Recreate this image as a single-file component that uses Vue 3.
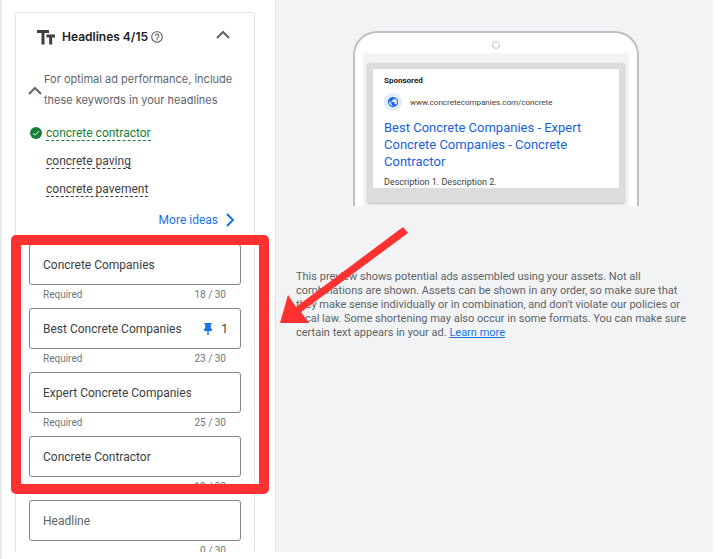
<template>
  <div class="editor">
    <section class="assets">
      <div class="card">
        <header class="card-header">
          <svg class="tt-icon" viewBox="0 0 18 15" aria-hidden="true">
            <path d="M0 0h12v3H7.500v11.500h-3V3H0zM9.500 4.500H18v3h-2.800v7h-3v-7H9.500z" />
          </svg>
          <h2>Headlines 4/15</h2>
          <button class="icon-btn" aria-label="Help">
            <svg class="help-icon" viewBox="0 0 24 24">
              <path d="M11 18h2v-2h-2v2zm1-16C6.480 2 2 6.480 2 12s4.480 10 10 10 10-4.480 10-10S17.520 2 12 2zm0 18c-4.410 0-8-3.590-8-8s3.590-8 8-8 8 3.590 8 8-3.590 8-8 8zm0-14c-2.210 0-4 1.790-4 4h2c0-1.100.9-2 2-2s2 .9 2 2c0 2-3 1.750-3 5h2c0-2.250 3-2.500 3-5 0-2.210-1.790-4-4-4z" />
            </svg>
          </button>
          <button class="icon-btn collapse" aria-label="Collapse headlines">
            <svg class="chevron" viewBox="0 0 14 9"><path d="M1 8l6-6 6 6" /></svg>
          </button>
        </header>

        <div class="hint">
          <button class="icon-btn" aria-label="Collapse keywords">
            <svg class="chevron" viewBox="0 0 14 9"><path d="M1 8l6-6 6 6" /></svg>
          </button>
          <p>For optimal ad performance, include these keywords in your headlines</p>
        </div>

        <ul class="keywords">
          <li v-for="k in keywords" :key="k.text" :class="{ used: k.used }">
            <svg v-if="k.used" class="check" viewBox="0 0 12 12" aria-hidden="true">
              <circle cx="6" cy="6" r="6" />
              <path d="M3 6.200l2 2 4-4" />
            </svg>
            <button class="keyword">{{ k.text }}</button>
          </li>
        </ul>

        <button class="more-ideas">
          More ideas
          <svg viewBox="0 0 9 14" aria-hidden="true"><path d="M1 1l6 6-6 6" /></svg>
        </button>

        <div class="fields">
          <div v-for="(h, i) in headlines" :key="i" class="field">
            <div class="box">
              <input v-model="h.text" type="text" placeholder="Headline" :aria-label="`Headline ${i + 1}`" />
              <span class="pin">
                <template v-if="h.pin">
                  <svg viewBox="0 0 8 12" aria-hidden="true">
                    <path d="M.5 0h7v1.500h-.7V5L8 6.500V8H4.700v4H3.300V8H0V6.500L1.200 5V1.500H.5z" />
                  </svg>
                  {{ h.pin }}
                </template>
              </span>
            </div>
            <div class="helper">
              <span>{{ h.required ? 'Required' : '' }}</span>
              <span>{{ h.text.length }} / 30</span>
            </div>
          </div>
          <div class="highlight"></div>
        </div>
      </div>
    </section>

    <section class="preview">
      <div class="phone">
        <div class="camera"></div>
        <div class="screen">
          <div class="ad-frame">
            <article class="ad">
              <strong>Sponsored</strong>
              <div class="site">
                <span class="globe">
                  <svg viewBox="0 0 24 24" aria-hidden="true">
                    <path d="M12 2C6.480 2 2 6.480 2 12s4.480 10 10 10 10-4.480 10-10S17.520 2 12 2zm-1 17.930c-3.950-.49-7-3.850-7-7.930 0-.62.08-1.210.21-1.790L9 15v1c0 1.100.9 2 2 2v1.930zm6.900-2.540c-.26-.81-1-1.390-1.900-1.390h-1v-3c0-.55-.45-1-1-1H8v-2h2c.55 0 1-.45 1-1V7h2c1.100 0 2-.9 2-2v-.41c2.930 1.190 5 4.060 5 7.410 0 2.080-.8 3.970-2.100 5.390z" />
                  </svg>
                </span>
                <span>www.concretecompanies.com/concrete</span>
              </div>
              <h3>Best Concrete Companies - Expert Concrete Companies - Concrete Contractor</h3>
              <p>Description 1. Description 2.</p>
            </article>
          </div>
        </div>
      </div>

      <p class="note">
        This preview shows potential ads assembled using your assets. Not all
        combinations are shown. Assets can be shown in any order, so make sure that
        they make sense individually or in combination, and don't violate our policies or
        local law. Some shortening may also occur in some formats. You can make sure
        certain text appears in your ad. <a href="#">Learn more</a>
      </p>

      <svg class="arrow" viewBox="0 0 128 97" aria-hidden="true">
        <path d="M123 0l5 6L21 85l8 11L0 96l8-28 8 12z" />
      </svg>
    </section>
  </div>
</template>

<script setup>
import { ref } from 'vue'

const keywords = [
  { text: 'concrete contractor', used: true },
  { text: 'concrete paving', used: false },
  { text: 'concrete pavement', used: false }
]

const headlines = ref([
  { text: 'Concrete Companies', required: true },
  { text: 'Best Concrete Companies', required: true, pin: 1 },
  { text: 'Expert Concrete Companies', required: true },
  { text: 'Concrete Contractor', required: false },
  { text: '', required: false }
])
</script>

<style>
body {
  margin: 0;
  background: #fff;
}
</style>

<style scoped>
.editor {
  display: flex;
  box-sizing: border-box;
  height: 100vh;
  padding-right: 5px;
  padding-bottom: 7px;
  border-left: 2px solid #e8e8ee;
  overflow: hidden;
  font-family: Roboto, 'Liberation Sans', sans-serif;
  color: #3c4043;
}

h2,
h3,
p,
ul {
  margin: 0;
  padding: 0;
}

button {
  padding: 0;
  border: 0;
  background: none;
  font: inherit;
  color: inherit;
  cursor: pointer;
}

.icon-btn {
  display: flex;
}

.assets {
  flex: 0 0 274px;
  box-sizing: border-box;
  padding: 12px 20px 0 13px;
  border-right: 1px solid #e0e2e5;
  overflow: hidden;
}

.card {
  padding: 0 13px;
  border: 1px solid #e1e3e6;
  border-radius: 3px;
}

.card-header {
  display: flex;
  align-items: center;
  height: 48px;
  padding: 0 11px 0 8px;
}

.tt-icon {
  width: 18px;
  height: 15px;
  margin-right: 7px;
  fill: #3c4043;
}

h2 {
  font: 600 12px/16px Inter, sans-serif;
  color: #202124;
}

.help-icon {
  width: 14px;
  height: 14px;
  margin-left: 2px;
  fill: #5f6368;
}

.collapse {
  margin-left: auto;
  padding-bottom: 6px;
}

.chevron {
  width: 14px;
  height: 9px;
  fill: none;
  stroke: #5f6368;
  stroke-width: 2;
}

.hint {
  display: flex;
  align-items: center;
  gap: 2px;
  margin: 8px -8px 0 -1px;
}

.hint p {
  font: 11px/21px Inter, sans-serif;
  color: #5f6368;
}

.keywords {
  margin-top: 8px;
  list-style: none;
}

.keywords li {
  display: flex;
  align-items: center;
  height: 28px;
  padding-left: 17px;
}

.keywords .used {
  padding-left: 1px;
  color: #188038;
}

.check {
  width: 12px;
  height: 12px;
  margin-right: 4px;
}

.check circle {
  fill: #188038;
}

.check path {
  fill: none;
  stroke: #fff;
  stroke-width: 1;
}

.keyword {
  border-bottom: 1px dashed;
  font-size: 12px;
  line-height: 14px;
}

.more-ideas {
  display: flex;
  align-items: center;
  gap: 8px;
  margin: 8px 6px 0 auto;
  font-size: 12px;
  line-height: 18px;
  color: #1a73e8;
}

.more-ideas svg {
  width: 9px;
  height: 14px;
  fill: none;
  stroke: #1a73e8;
  stroke-width: 2;
}

.fields {
  position: relative;
  margin-top: 15px;
}

.field {
  height: 64px;
}

.box {
  display: flex;
  align-items: center;
  box-sizing: border-box;
  height: 41px;
  padding: 0 12px 0 13px;
  border: 1px solid #80868b;
  border-radius: 3px;
}

input {
  flex: 1;
  min-width: 0;
  padding: 0;
  border: 0;
  outline: 0;
  background: none;
  font: 12px/16px Roboto, sans-serif;
  color: #3c4043;
}

input::placeholder {
  color: #5f6368;
}

.pin {
  display: flex;
  flex: 0 0 37px;
  align-items: center;
  justify-content: flex-end;
  gap: 9px;
  font-size: 12px;
}

.pin svg {
  width: 8px;
  height: 12px;
  fill: #1a73e8;
}

.helper {
  display: flex;
  justify-content: space-between;
  padding: 3px 15px 0 14px;
  font-size: 10px;
  line-height: 14px;
  color: #70757a;
}

.highlight {
  position: absolute;
  top: -9px;
  right: -28px;
  left: -18px;
  box-sizing: border-box;
  height: 259px;
  border: 10px solid #ff3131;
  border-radius: 5px;
  pointer-events: none;
}

.preview {
  position: relative;
  flex: 1;
  min-width: 0;
  padding-left: 3px;
  background: #f1f3f4;
}

.phone {
  box-sizing: border-box;
  max-width: 286px;
  height: 175px;
  margin: 31px auto 0;
  padding: 0 8px;
  border: 2px solid #bdc1c6;
  border-bottom: 0;
  border-radius: 24px 24px 0 0;
  background: #fff;
}

.camera {
  box-sizing: border-box;
  width: 8px;
  height: 8px;
  margin: 0 auto;
  border: 1px solid #bdc1c6;
  border-radius: 50%;
  transform: translateY(8px);
}

.screen {
  box-sizing: border-box;
  height: 153px;
  margin-top: 12px;
  padding: 10px 4px 3px;
  background: #f1f3f4;
}

.ad-frame {
  box-sizing: border-box;
  height: 140px;
  padding: 6px;
  border-radius: 3px;
  background: #dcdcdc;
  box-shadow: 0 1px 2px #bbb;
}

.ad {
  box-sizing: border-box;
  height: 119px;
  padding: 7px 11px 0;
  background: #fff;
}

.ad strong {
  display: block;
  font-size: 8px;
  line-height: 10px;
  color: #202124;
}

.site {
  display: flex;
  align-items: center;
  gap: 8px;
  margin-top: 7px;
  font-size: 8px;
}

.globe {
  display: flex;
  align-items: center;
  justify-content: center;
  width: 18px;
  height: 18px;
  border-radius: 50%;
  background: #e0ebfc;
}

.globe svg {
  width: 12px;
  height: 12px;
  fill: #1a62e8;
}

.ad h3 {
  margin-top: 8px;
  font-size: 13px;
  font-weight: 400;
  line-height: 17px;
  color: #1a5fdc;
}

.ad p {
  margin-top: 6px;
  font-size: 9px;
  line-height: 12px;
}

.note {
  margin: 64px 26px 0 17px;
  font-size: 11px;
  line-height: 14px;
  color: #5f6368;
}

.note a {
  color: #1a73e8;
}

.arrow {
  position: absolute;
  top: 227px;
  left: 4px;
  width: 128px;
  height: 97px;
  fill: #ff3131;
}
</style>
